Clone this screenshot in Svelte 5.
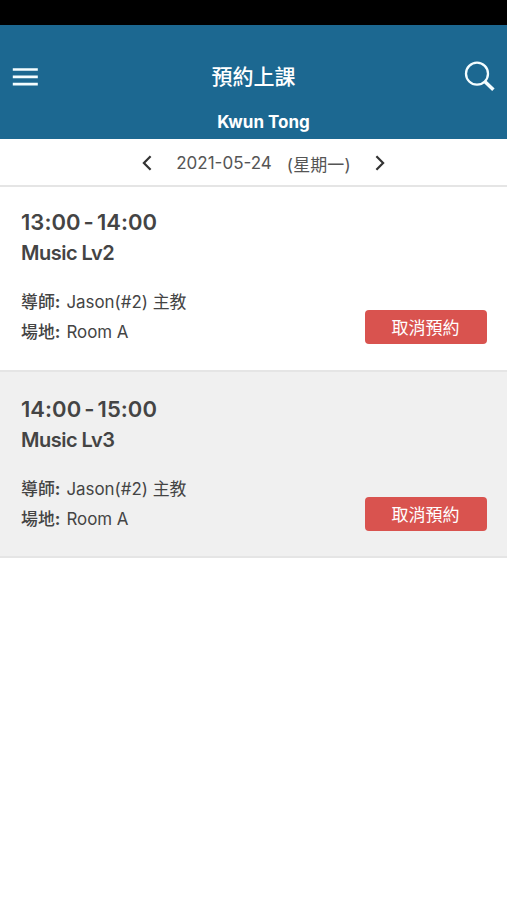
<script lang="ts">
  type Lesson = {
    start: string;
    end: string;
    title: string;
    teacher: string;
    room: string;
  };

  const branch = 'Kwun Tong';
  const date = '2021-05-24';
  const weekday = '(星期一)';

  const lessons: Lesson[] = [
    { start: '13:00', end: '14:00', title: 'Music Lv2', teacher: 'Jason(#2) 主教', room: 'Room A' },
    { start: '14:00', end: '15:00', title: 'Music Lv3', teacher: 'Jason(#2) 主教', room: 'Room A' },
  ];
</script>

<div class="screen">
  <div class="status-bar"></div>

  <header class="header">
    <div class="header-row">
      <button class="icon-btn" type="button" aria-label="Menu">
        <svg width="26" height="20" viewBox="0 0 26 20">
          <path d="M0.8 2.5H25.8M0.8 9.8H25.8M0.8 17.2H25.8" stroke="#f4fdff" stroke-width="2.7" />
        </svg>
      </button>
      <h1>預約上課</h1>
      <button class="icon-btn" type="button" aria-label="Search">
        <svg width="32" height="32" viewBox="0 0 32 32" fill="none" stroke="#f4fdff">
          <circle cx="13" cy="12.7" r="11" stroke-width="2.3" />
          <path d="M20.8 20.6L29.4 28.8" stroke-width="3.5" />
        </svg>
      </button>
    </div>
    <div class="branch">{branch}</div>
  </header>

  <nav class="date-bar">
    <button class="icon-btn" type="button" aria-label="Previous day">
      <svg width="10" height="16" viewBox="0 0 10 16">
        <path d="M8.6 1.2L1.9 8L8.6 14.8" fill="none" stroke="#333" stroke-width="2.2" />
      </svg>
    </button>
    <span class="date">{date}</span>
    <span class="weekday">{weekday}</span>
    <button class="icon-btn" type="button" aria-label="Next day">
      <svg width="10" height="16" viewBox="0 0 10 16">
        <path d="M1.4 1.2L8.1 8L1.4 14.8" fill="none" stroke="#333" stroke-width="2.2" />
      </svg>
    </button>
  </nav>

  <main>
    {#each lessons as lesson (lesson.start)}
      <section class="lesson">
        <div class="lesson-time">{lesson.start}<span class="dash">-</span>{lesson.end}</div>
        <h2>{lesson.title}</h2>
        <div class="lesson-bottom">
          <div class="lesson-info">
            <div><strong>導師<b>:</b></strong><span>{lesson.teacher}</span></div>
            <div><strong>場地<b>:</b></strong><span>{lesson.room}</span></div>
          </div>
          <button class="cancel-btn" type="button">取消預約</button>
        </div>
      </section>
    {/each}
  </main>
</div>

<style>
  :global(body) {
    margin: 0;
    background: #fff;
  }

  .screen {
    min-height: 900px;
    background: #fff;
    color: #444;
    font-family: Inter, 'Noto Sans CJK TC', sans-serif;
  }

  .status-bar {
    height: 25px;
    background: #000;
  }

  .header {
    box-sizing: border-box;
    height: 114px;
    padding-top: 32px;
    background: #1c6891;
    color: #fff;
  }

  .header-row {
    display: grid;
    grid-template-columns: 34px 1fr 34px;
    align-items: center;
    height: 40px;
    padding: 0 9px 0 12px;
  }

  h1 {
    margin: 0;
    padding-right: 3px;
    font-size: 21px;
    font-weight: 500;
    line-height: 40px;
    text-align: center;
  }

  .icon-btn {
    display: flex;
    padding: 0;
    border: none;
    background: none;
  }

  .branch {
    padding: 13px 0 0 20px;
    font-size: 17px;
    font-weight: 700;
    line-height: 24px;
    text-align: center;
  }

  .date-bar {
    display: flex;
    align-items: center;
    justify-content: center;
    box-sizing: border-box;
    height: 48px;
    padding: 2px 0 0 20px;
    border-bottom: 2px solid #e5e5e5;
    font-size: 17px;
    color: #555;
  }

  .date {
    margin: 0 15px 0 24px;
  }

  .weekday {
    margin-right: 24px;
    letter-spacing: 0.1px;
  }

  .lesson {
    box-sizing: border-box;
    height: 185px;
    padding: 20px 20px 0 21px;
    border-bottom: 2px solid #e5e5e5;
  }

  .lesson:nth-child(even) {
    height: 186px;
    padding-top: 22px;
    background: #f0f0f0;
  }

  .lesson-time {
    font-size: 22px;
    font-weight: 600;
    line-height: 30px;
    letter-spacing: 0.05px;
  }

  .dash {
    margin: 0 3px;
  }

  h2 {
    margin: 0;
    font-size: 20px;
    font-weight: 600;
    line-height: 32px;
    letter-spacing: -0.5px;
  }

  .lesson-bottom {
    display: flex;
    justify-content: space-between;
    margin-top: 18px;
  }

  .lesson-info {
    font-size: 16.9px;
    line-height: 30.4px;
  }

  .lesson-info strong {
    margin-right: 6px;
    font-weight: 500;
  }

  .lesson-info b {
    font-weight: 700;
  }

  .cancel-btn {
    width: 122px;
    height: 34px;
    margin-top: 23px;
    padding: 0 1px 2px 0;
    border: none;
    border-radius: 4px;
    background: #d9534f;
    color: #fff;
    font-family: inherit;
    font-size: 17px;
  }
</style>
